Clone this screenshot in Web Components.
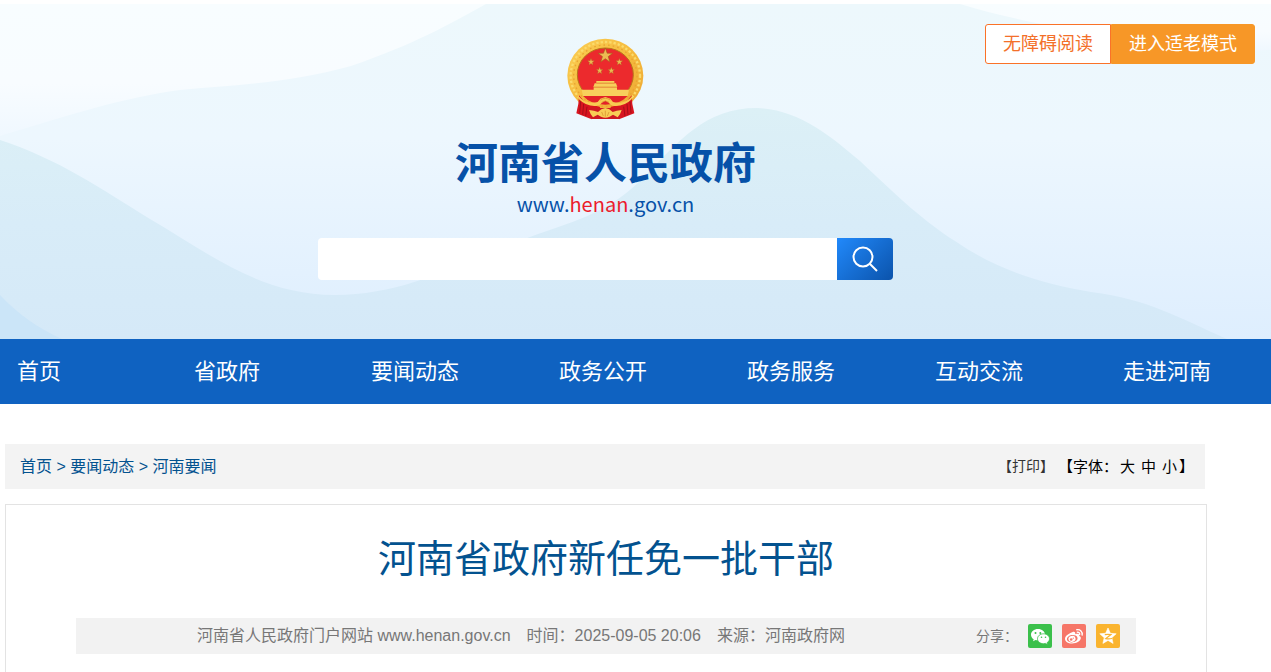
<!DOCTYPE html>
<html lang="zh-CN">
<head>
<meta charset="utf-8">
<meta name="viewport" content="width=device-width, initial-scale=1">
<title>河南省政府新任免一批干部</title>
<style>
  body {
    margin: 0;
    padding-top: 4px;
    background: #fff;
    font-family: "Liberation Sans", "Noto Sans CJK SC", sans-serif;
    font-size: 16px;
    overflow-x: hidden;
  }
  main {
    display: block;
    padding: 40px 64px 0 5px;
  }
</style>
</head>
<body>
<site-header>
  <access-tools slot="tools"></access-tools>
  <site-search></site-search>
</site-header>
<site-nav></site-nav>
<main>
  <crumb-bar>
    <a href="#">首页</a> &gt; <a href="#">要闻动态</a> &gt; <a href="#">河南要闻</a>
  </crumb-bar>
  <article-panel>
    <span slot="title">河南省政府新任免一批干部</span>
    <span slot="meta">河南省人民政府门户网站 www.henan.gov.cn</span>
    <span slot="meta">时间：2025-09-05 20:06</span>
    <span slot="meta">来源：河南政府网</span>
    <share-links slot="share"></share-links>
  </article-panel>
</main>

<script>
class NationalEmblem extends HTMLElement {
  connectedCallback() {
    this.attachShadow({ mode: 'open' });
    this.shadowRoot.innerHTML = `
      <style>
        :host { display: block; }
        svg { display: block; width: 77px; height: 82px; }
      </style>
      <svg viewBox="80 40 231 246" aria-hidden="true">
        <defs>
          <linearGradient id="gold" x1="0" y1="0" x2="1" y2="1">
            <stop offset="0" stop-color="#fbcf55"/>
            <stop offset=".5" stop-color="#f5bb3e"/>
            <stop offset="1" stop-color="#eda733"/>
          </linearGradient>
          <path id="star" d="M0-10 2.4-3.2 9.5-3.1 3.8 1.2 5.9 8.1 0 4 -5.9 8.1 -3.8 1.2 -9.5-3.1 -2.4-3.2Z"/>
        </defs>
        <ellipse cx="195" cy="153" rx="114" ry="111" fill="url(#gold)"/>
        <ellipse cx="195" cy="153" rx="104" ry="101" fill="none" stroke="#fbdb6c" stroke-width="7" stroke-dasharray="7 6"/>
        <ellipse cx="195" cy="153" rx="95" ry="92" fill="none" stroke="#e9a432" stroke-width="4" stroke-dasharray="5 9"/>
        <ellipse cx="195" cy="150" rx="84" ry="80" fill="#ec2a2d" stroke="#b77419" stroke-width="3"/>
        <g fill="#edba52" stroke="#a35a1c" stroke-width=".8">
          <use href="#star" transform="translate(195 93) scale(2.300)"/>
          <use href="#star" transform="translate(152 112) scale(1.100)"/>
          <use href="#star" transform="translate(237 112) scale(1.100)"/>
          <use href="#star" transform="translate(178 138) scale(1.100)"/>
          <use href="#star" transform="translate(213 138) scale(1.100)"/>
        </g>
        <g fill="#f8cf5c">
          <path d="M168 169h54v6h-54zM163 176h64l4 11h-72zM160 188h70v8h-70z"/>
          <path d="M124 195h142l-4 19H128z"/>
        </g>
        <path d="M160 187h70M168 175h54" stroke="#d98d2c" stroke-width="2"/>
        <path d="M128 214h134q-24 26-67 26t-67-26z" fill="#e32128"/>
        <path d="M116 212q20 30 62 34l6 12-22 2-8 24-46-18q8-30 8-54z" fill="#d8141f"/>
        <path d="M274 212q-20 30-62 34l-6 12 22 2 8 24 46-18q-8-30-8-54z" fill="#d8141f"/>
        <path d="M121 230l-3 36M130 238l-3 32M140 246l-4 28M269 230l3 36M260 238l3 32M250 246l4 28" stroke="#a50e19" stroke-width="3"/>
        <path d="M148 250h94l-5 33h-84z" fill="#ce1822"/>
        <path d="M112 212q26 30 60 20l8-10 15-5 15 5 8 10q34 10 60-20l-4 12q-22 22-52 20-12-2-17-10l-10-6-10 6q-5 8-17 10-30 2-52-20z" fill="#f8ca52"/>
        <path d="M180 226q15-10 30 0M184 233q11-8 22 0" fill="none" stroke="#d48b29" stroke-width="2"/>
        <path d="M146 256q16 2 27 6l10-8 12-4 12 4 10 8q11-4 27-6-4 14-12 22l-14-8-10 6q-13 6-26 0l-10-6-14 8q-8-8-12-22z" fill="#f8cd55"/>
        <path d="M184 262l5 12M195 258v18M206 262l-5 12" stroke="#d48b29" stroke-width="2"/>
      </svg>
    `;
  }
}
customElements.define('national-emblem', NationalEmblem);

class SiteHeader extends HTMLElement {
  connectedCallback() {
    this.attachShadow({ mode: 'open' });
    this.shadowRoot.innerHTML = `
      <style>
        :host {
          display: block;
          position: relative;
          overflow: hidden;
        }
        .waves {
          position: absolute;
          inset: 0;
          width: 100%;
          height: 100%;
        }
        .tools {
          position: absolute;
          top: 20px;
          right: 16px;
        }
        .brand {
          position: relative;
          display: flex;
          flex-direction: column;
          align-items: center;
          padding: 34px 60px 59px 0;
        }
        h1 {
          margin: 16px 0 0;
          font-size: 43px;
          font-weight: 700;
          line-height: 56px;
          color: #0651a8;
        }
        .domain {
          margin-bottom: 22px;
          font: 20px/24px "Noto Sans CJK SC", sans-serif;
          color: #0651a8;
        }
        .domain b {
          font-weight: 400;
          color: #ec1c2c;
        }
      </style>
      <svg class="waves" viewBox="0 4 1271 335" preserveAspectRatio="none" aria-hidden="true">
        <defs>
          <linearGradient id="sky" x1="0" y1="0" x2="0" y2="1">
            <stop offset="0" stop-color="#edf8fc"/>
            <stop offset=".4" stop-color="#edf7fe"/>
            <stop offset="1" stop-color="#deeefe"/>
          </linearGradient>
          <linearGradient id="mist" x1="0" y1="0" x2="0" y2="1">
            <stop offset="0" stop-color="#f8fdff"/>
            <stop offset=".6" stop-color="#f8fcff"/>
            <stop offset="1" stop-color="#f0f8ff"/>
          </linearGradient>
          <linearGradient id="hill" x1="0" y1="0" x2="0" y2="1">
            <stop offset="0" stop-color="#dcf0f6"/>
            <stop offset=".5" stop-color="#d8ecf8"/>
            <stop offset="1" stop-color="#d5e9f8"/>
          </linearGradient>
        </defs>
        <path fill="url(#sky)" d="M0 4h1271v335H0z"/>
        <path fill="url(#mist)" d="M0 4h486C450 24 415 44 351 66 290 83 235 85 180 90 122 98 80 112 0 136z"/>
        <path fill="url(#mist)" d="M960 4C1020 22 1080 32 1130 38 1180 46 1230 52 1271 50V4z"/>
        <path fill="url(#hill)" d="M0 140C60 160 100 188 150 219 210 254 260 295 335 295 410 295 470 258 530 237 570 222 605 215 640 181 680 140 705 108 757 108 800 110 830 136 860 161 900 199 925 222 955 241 1000 272 1045 284 1091 292 1150 300 1175 316 1227 339H0z"/>
        <path fill="#cbe5f8" d="M0 295Q26 323 62 339H0z"/>
      </svg>
      <div class="brand">
        <national-emblem></national-emblem>
        <h1>河南省人民政府</h1>
        <div class="domain">www.<b>henan</b>.gov.cn</div>
        <slot></slot>
      </div>
      <div class="tools"><slot name="tools"></slot></div>
    `;
  }
}
customElements.define('site-header', SiteHeader);

class AccessTools extends HTMLElement {
  connectedCallback() {
    this.attachShadow({ mode: 'open' });
    this.shadowRoot.innerHTML = `
      <style>
        :host { display: flex; }
        a {
          box-sizing: border-box;
          height: 40px;
          padding: 0 17px;
          border: 1px solid #fa7228;
          border-radius: 3px 0 0 3px;
          background: #fff;
          color: #f3702a;
          font-size: 18px;
          line-height: 38px;
          text-decoration: none;
        }
        .elder {
          border-color: #f79727;
          border-radius: 0 3px 3px 0;
          background: #f79727;
          color: #fff;
        }
      </style>
      <a href="#">无障碍阅读</a>
      <a href="#" class="elder">进入适老模式</a>
    `;
  }
}
customElements.define('access-tools', AccessTools);

class SiteSearch extends HTMLElement {
  connectedCallback() {
    this.attachShadow({ mode: 'open' });
    this.shadowRoot.innerHTML = `
      <style>
        :host {
          display: block;
          width: 100%;
          max-width: 575px;
        }
        form {
          display: flex;
          height: 42px;
          border-radius: 4px;
          overflow: hidden;
        }
        input {
          flex: 1;
          min-width: 0;
          border: 0;
          padding: 0 12px;
          background: #fff;
          font: inherit;
          outline: none;
        }
        button {
          display: flex;
          align-items: center;
          justify-content: center;
          width: 56px;
          border: 0;
          padding: 0;
          background: linear-gradient(135deg, #2189fb, #0b53ab);
          cursor: pointer;
        }
      </style>
      <form onsubmit="return false">
        <input type="text" aria-label="搜索">
        <button aria-label="搜索">
          <svg width="26" height="26" viewBox="0 0 26 26" fill="none" stroke="#fff" stroke-width="2">
            <circle cx="11" cy="11" r="9.500"/>
            <path d="M18 18l7 7"/>
          </svg>
        </button>
      </form>
    `;
  }
}
customElements.define('site-search', SiteSearch);

class SiteNav extends HTMLElement {
  connectedCallback() {
    const items = ['首页', '省政府', '要闻动态', '政务公开', '政务服务', '互动交流', '走进河南'];
    this.attachShadow({ mode: 'open' });
    this.shadowRoot.innerHTML = `
      <style>
        :host {
          display: block;
          background: #0f62c1;
        }
        nav {
          display: grid;
          grid-template-columns: repeat(7, 1fr);
          margin: 0 10px 0 -55px;
        }
        a {
          color: #fff;
          font-size: 22px;
          line-height: 65px;
          text-align: center;
          text-decoration: none;
          white-space: nowrap;
        }
      </style>
      <nav>${items.map((t) => `<a href="#">${t}</a>`).join('')}</nav>
    `;
  }
}
customElements.define('site-nav', SiteNav);

class CrumbBar extends HTMLElement {
  connectedCallback() {
    this.attachShadow({ mode: 'open' });
    this.shadowRoot.innerHTML = `
      <style>
        :host {
          display: flex;
          justify-content: space-between;
          margin-right: 2px;
          padding: 0 11px 0 15px;
          background: #f3f3f3;
          color: #03528f;
          line-height: 45px;
        }
        ::slotted(a) {
          color: #03528f;
          text-decoration: none;
        }
        .tools {
          display: flex;
          color: #000;
          font-size: 15px;
        }
        button {
          border: 0;
          padding: 0;
          background: none;
          color: inherit;
          font: inherit;
          cursor: pointer;
        }
        .print {
          margin-right: 4px;
          color: #333;
          font-size: 14px;
        }
        .sizes {
          display: flex;
          gap: 6px;
          margin: 0 2px;
        }
      </style>
      <div><slot></slot></div>
      <div class="tools">
        <button class="print">【打印】</button>
        <span>【字体：</span>
        <span class="sizes"><button>大</button><button>中</button><button>小</button></span>
        <span>】</span>
      </div>
    `;
  }
}
customElements.define('crumb-bar', CrumbBar);

class ArticlePanel extends HTMLElement {
  connectedCallback() {
    this.attachShadow({ mode: 'open' });
    this.shadowRoot.innerHTML = `
      <style>
        :host {
          display: block;
          margin-top: 15px;
          border: 1px solid #e3e3e3;
          border-bottom: 0;
          padding: 24px 70px 18px;
        }
        h2 {
          margin: 0 0 29px;
          color: #03528f;
          font-size: 38px;
          font-weight: 400;
          line-height: 60px;
          text-align: center;
        }
        .bar {
          display: flex;
          justify-content: space-between;
          padding: 0 16px 0 121px;
          background: #f2f2f2;
          color: #777;
          line-height: 36px;
        }
        .meta { display: flex; gap: 16px; }
      </style>
      <h2><slot name="title"></slot></h2>
      <div class="bar">
        <div class="meta"><slot name="meta"></slot></div>
        <slot name="share"></slot>
      </div>
    `;
  }
}
customElements.define('article-panel', ArticlePanel);

class ShareLinks extends HTMLElement {
  connectedCallback() {
    this.attachShadow({ mode: 'open' });
    this.shadowRoot.innerHTML = `
      <style>
        :host {
          display: flex;
          align-items: center;
          gap: 10px;
          font-size: 14px;
        }
        a {
          width: 24px;
          height: 24px;
          border-radius: 2px;
        }
        svg { display: block; }
        .wechat { background: #3bc04b; }
        .weibo { background: #f67668; }
        .qzone { background: #fab42f; }
      </style>
      <span>分享：</span>
      <a href="#" class="wechat" aria-label="微信">
        <svg width="24" height="24" viewBox="0 0 24 24">
          <path fill="#fff" d="M10 5c-4 0-7 2.500-7 5.700 0 1.900 1 3.500 2.700 4.500L5 17.300l2.600-1.300c.8.200 1.500.3 2.400.3 4 0 7-2.500 7-5.600S14 5 10 5z"/>
          <path fill="#fff" stroke="#3bc04b" stroke-width=".8" d="M15.500 9.800c-3.400 0-6 2.200-6 5s2.600 4.900 6 4.900c.7 0 1.300-.1 1.900-.3l2.400 1.200-.6-2c1.400-.9 2.300-2.300 2.300-3.800 0-2.800-2.600-5-6-5z"/>
          <g fill="#3bc04b"><circle cx="7.500" cy="9" r="1"/><circle cx="12.300" cy="9" r="1"/><circle cx="13.500" cy="13.300" r=".8"/><circle cx="17.500" cy="13.300" r=".8"/></g>
        </svg>
      </a>
      <a href="#" class="weibo" aria-label="微博">
        <svg width="24" height="24" viewBox="0 0 24 24">
          <path fill="#fff" d="M10.200 8.200c1.200-.5 2.400-.5 2.900.2.300.5.300 1.100 0 1.800 2-.8 3.700-.6 4 .4.200.5.100 1-.1 1.500 1.200.4 1.800 1.100 1.800 2 0 2.700-3.900 5.400-8.800 5.400-4 0-7-1.900-7-4.800 0-2.600 3.600-5.300 7.200-6.500z"/>
          <ellipse cx="10.200" cy="14.700" rx="5.400" ry="3.700" fill="#f67668" transform="rotate(-8 10.200 14.700)"/>
          <ellipse cx="10" cy="14.900" rx="3.600" ry="2.900" fill="#fff" transform="rotate(-15 10 14.900)"/>
          <circle cx="9.200" cy="15.500" r="1.300" fill="#f67668"/><circle cx="11.300" cy="14.200" r=".6" fill="#f67668"/>
          <path fill="none" stroke="#fff" stroke-width="1.400" stroke-linecap="round" d="M14.800 5.700c3.300-.6 6 2 5.300 5.300M15.300 8.200c1.500-.3 2.700.9 2.300 2.300"/>
        </svg>
      </a>
      <a href="#" class="qzone" aria-label="QQ空间">
        <svg width="24" height="24" viewBox="0 0 24 24">
          <path fill="#fff" stroke="#fff" stroke-width=".6" stroke-linejoin="round" d="M12 4l2.400 5.300 5.800.5-4.400 3.900 1.300 5.700-5.100-3-5.100 3 1.300-5.700-4.400-3.900 5.800-.5z"/>
          <path fill="none" stroke="#fab42f" stroke-width="1.200" d="M8.800 10.600q3-.6 6.200 0l-5.200 4q3 .5 6.200-.1"/>
        </svg>
      </a>
    `;
  }
}
customElements.define('share-links', ShareLinks);
</script>
</body>
</html>
